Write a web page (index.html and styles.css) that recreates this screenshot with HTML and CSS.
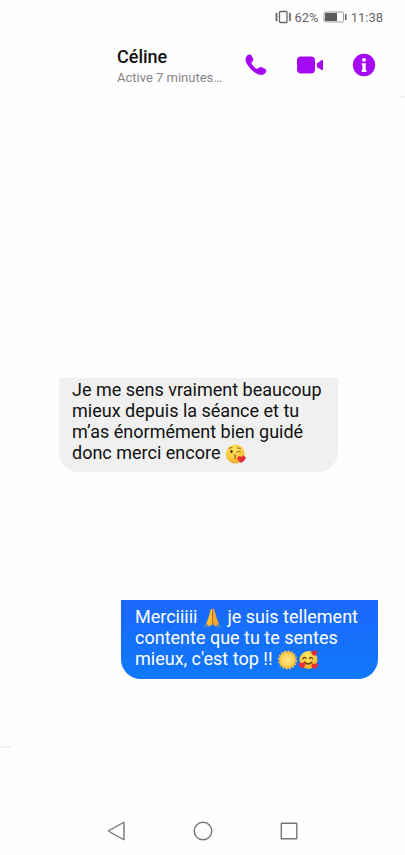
FILE: index.html
```html
<!DOCTYPE html>
<html lang="fr">
<head>
<meta charset="utf-8">
<meta name="viewport" content="width=device-width, initial-scale=1">
<title>Céline</title>
<link rel="stylesheet" href="styles.css">
</head>
<body>
<div class="status">
  <svg width="17" height="14" viewBox="0 0 17 14" fill="none" stroke="#666" aria-hidden="true">
    <rect x="4.500" y="1.500" width="7.500" height="11" rx="1" stroke-width="1.300"/>
    <path d="M1 3l1 1.300-1 1.400 1 1.300-1 1.400 1 1.300-1 1.300M15.500 3l-1 1.300 1 1.400-1 1.300 1 1.400-1 1.300 1 1.300" stroke-width="1.500"/>
  </svg>
  <span class="percent">62%</span>
  <svg width="24" height="12" viewBox="0 0 24 12" aria-hidden="true">
    <rect x="1" y="1" width="19.500" height="10" rx="1.500" fill="#fff" stroke="#999"/>
    <path fill="#5c5c5c" d="M2 2h12v8H2zM22 3h1.500v6H22z"/>
  </svg>
  <time class="clock">11:38</time>
</div>

<header class="header">
  <div class="contact">
    <h1 class="name">Céline</h1>
    <p class="activity">Active 7 minutes…</p>
  </div>
  <div class="actions">
    <button type="button" class="action" aria-label="Appel audio">
      <svg width="24" height="24" viewBox="0 0 24 24" fill="#a60af5">
        <path d="M2.400 3.400C3.300 2.100 5 1 6.600 1.700c.8.300 1.300 1.300 2 2.900.8 1.700 1 2.600.2 3.500l-1 1.200c-.4.500-.4 1 0 1.700.9 1.500 2.600 3.300 4.400 4.500.7.400 1.200.4 1.700 0l1.300-1.100c.8-.7 1.700-.6 3.200.1 1.800.8 3.300 1.500 3.700 2.300.7 1.500-.6 3.400-1.900 4.300-2.200 1.500-5.400.9-8.700-1.100C8.300 18 4.700 14.200 2.500 10.200 1.200 7.600 1.200 5.100 2.400 3.400z"/>
      </svg>
    </button>
    <button type="button" class="action" aria-label="Appel vidéo">
      <svg width="28" height="24" viewBox="0 0 28 24" fill="#a60af5">
        <rect x="1" y="3.500" width="18" height="17" rx="4"/>
        <path d="M20.800 10.500L25.300 7.300q1.700-1 1.700.8v8q0 1.800-1.700.7L20.800 14z"/>
      </svg>
    </button>
    <button type="button" class="action" aria-label="Informations">
      <svg width="24" height="24" viewBox="0 0 24 24">
        <circle cx="12" cy="12" r="11.200" fill="#a60af5"/>
        <circle cx="12" cy="6.800" r="1.900" fill="#fff"/>
        <path fill="#fff" d="M9.800 10.200h3.900v7.100h.8V19H9.500v-1.700h.9v-5.400h-.6z"/>
      </svg>
    </button>
  </div>
</header>
<div class="edge edge-right"></div>

<main class="chat">
  <p class="bubble received">Je me sens vraiment beaucoup mieux depuis la séance et tu m’as énormément bien guidé donc merci encore <svg class="emoji" viewBox="0 0 20 20" role="img" aria-label="Visage envoyant un bisou">
      <defs><radialGradient id="face" cx=".45" cy=".3" r=".75"><stop offset="0" stop-color="#ffe461"/><stop offset=".6" stop-color="#fdcb3d"/><stop offset="1" stop-color="#ef9a26"/></radialGradient></defs>
      <circle cx="9.800" cy="10" r="9.400" fill="url(#face)"/>
      <ellipse cx="6" cy="7.500" rx="1.200" ry="1.700" fill="#593411"/>
      <path d="M11 8.200q2-2 4-.2M3.500 4.700q1.200-1.500 3-1.200M12 4q1.800-.5 3 .8M8.500 10.800c2.500-.4 2.400 1.600.4 1.800 2.200.2 2 2.200-.3 2" fill="none" stroke="#8a5518" stroke-width=".9" stroke-linecap="round"/>
      <path d="M15.500 18.300c-2.300-1.500-4-3.300-2.800-5 1-1.300 2.400-.7 2.900.3.700-1.500 2.600-2 3.700-.7 1.300 1.900-.9 4.100-3.800 5.400z" fill="#e62d35" stroke="#e62d35"/>
    </svg></p>

  <p class="bubble sent">Merciiiii <svg class="emoji" viewBox="0 0 20 20" role="img" aria-label="Mains jointes">
      <path d="M1 18.500l4.500-4.300 2.800 2.600-2.500 2.500H1zM19 18.500l-4.500-4.300-2.800 2.600 2.500 2.500H19z" fill="#4e86b8"/>
      <path d="M8.200 1.200C9 .2 9.800.7 9.800 2v14.200l-3 2.300-3.200-3C5.800 11.500 6.900 6.300 8.200 1.200z" fill="#fdbd35"/>
      <path d="M11.800 1.200C11 .2 10.200.7 10.200 2v14.200l3 2.300 3.200-3C14.200 11.500 13.100 6.300 11.800 1.200z" fill="#f2a52a"/>
      <path d="M10 1.500v15" stroke="#a66a25" stroke-width=".8"/>
    </svg> je suis tellement contente que tu te sentes mieux, c'est top !! <svg class="emoji" viewBox="0 0 20 20" role="img" aria-label="Soleil">
      <defs><radialGradient id="sun"><stop offset="0" stop-color="#ffe78a"/><stop offset=".75" stop-color="#fcd252"/><stop offset="1" stop-color="#f3b43b"/></radialGradient></defs>
      <circle cx="10" cy="10" r="8.700" fill="none" stroke="#e8bd55" stroke-width="1.800" stroke-dasharray="2 1.400"/>
      <circle cx="10" cy="10" r="8.400" fill="url(#sun)"/>
    </svg><svg class="emoji" viewBox="0 0 20 20" role="img" aria-label="Visage souriant avec des cœurs">
      <circle cx="10" cy="10" r="9" fill="url(#face)"/>
      <path d="M4.500 8.700q1.500-2.300 3-.3M11 8.400q1.500-2 3 .3M6 12q3.800 4 7.500 0" fill="none" stroke="#63380f" stroke-width="1.300" stroke-linecap="round"/>
      <path d="M15.500 5.500c-2.300-1-3.200-2.800-2.100-4 .9-.9 2-.4 2.300.5.500-1.200 2-1.300 2.700-.3.900 1.500-.7 3.100-2.900 3.800zM3.500 18.300c-2.600-1.600-4-3.700-2.800-5.100 1-1 2.300-.5 2.700.5.600-1.300 2.200-1.500 3-.4 1 1.600-.6 3.700-2.900 5zM15.800 18.800c-2.200-1.200-3.300-3.200-2.200-4.600.9-.9 2.200-.5 2.600.5.500-1.200 2.200-1.500 3-.4 1 1.600-.9 3.600-3.400 4.500z" fill="#e52c3c" stroke="#e52c3c" stroke-width=".6"/>
    </svg></p>
</main>
<div class="edge edge-left"></div>

<nav class="nav" aria-label="Navigation">
  <button type="button" class="nav-button" aria-label="Retour">
    <svg width="20" height="20" viewBox="0 0 20 20"><path d="M17 1.800v16.400q0 .6-.6.300L2 10.500q-.7-.5 0-1L16.400 1.500q.6-.3.600.3z"/></svg>
  </button>
  <button type="button" class="nav-button" aria-label="Accueil">
    <svg width="20" height="20" viewBox="0 0 20 20"><circle cx="10" cy="10" r="8.800"/></svg>
  </button>
  <button type="button" class="nav-button" aria-label="Applications récentes">
    <svg width="20" height="20" viewBox="0 0 20 20"><rect x="2.300" y="2.300" width="15.500" height="15.500" rx=".5"/></svg>
  </button>
</nav>
</body>
</html>
```
FILE: styles.css
```css
* {
  box-sizing: border-box;
}

body {
  margin: 0;
  min-height: 100vh;
  display: flex;
  flex-direction: column;
  background: #fefefe;
  color: #111;
  font-family: Roboto, "Liberation Sans", sans-serif;
}

h1,
p {
  margin: 0;
}

button {
  display: flex;
  padding: 0;
  border: 0;
  background: none;
  cursor: pointer;
}

.status {
  display: flex;
  align-items: center;
  justify-content: flex-end;
  height: 34px;
  padding: 0 22px;
  color: #666;
  font-size: 13px;
}

.percent {
  margin: 0 4px 0 2px;
}

.clock {
  margin-left: 4px;
}

.header {
  display: flex;
  align-items: center;
  gap: 16px;
  height: 62px;
  padding: 0 29px 0 117px;
}

.contact {
  flex: 1;
  min-width: 0;
  padding-top: 4px;
}

.name {
  font-size: 18px;
  font-weight: 500;
  line-height: 22px;
}

.activity {
  color: #858585;
  font-size: 13px;
  line-height: 20px;
  white-space: nowrap;
}

.actions {
  display: flex;
  gap: 28px;
}

.edge {
  height: 2px;
  background: #f2f2f2;
}

.edge-right {
  width: 5px;
  align-self: flex-end;
}

.edge-left {
  width: 11px;
}

.chat {
  flex: 1;
  display: flex;
  flex-direction: column;
  padding: 280px 27px 64px 59px;
}

.bubble {
  border-radius: 0 0 20px 20px;
  font-size: 18px;
  line-height: 21px;
}

.received {
  align-self: flex-start;
  max-width: 279px;
  padding: 1px 13px 9px;
  background: #f0f0f0;
}

.sent {
  align-self: flex-end;
  max-width: 257px;
  margin-top: 128px;
  padding: 6px 13px 10px 14px;
  background: linear-gradient(#1b68fb, #0f78fb);
  color: #fff;
}

.emoji {
  width: 21px;
  height: 20px;
  vertical-align: -3px;
  margin: -2px 0;
}

.nav {
  display: flex;
  justify-content: center;
  gap: 66px;
  padding: 73px 0 14px;
}

.nav-button svg {
  fill: none;
  stroke: #777;
  stroke-width: 1.400px;
}
```
